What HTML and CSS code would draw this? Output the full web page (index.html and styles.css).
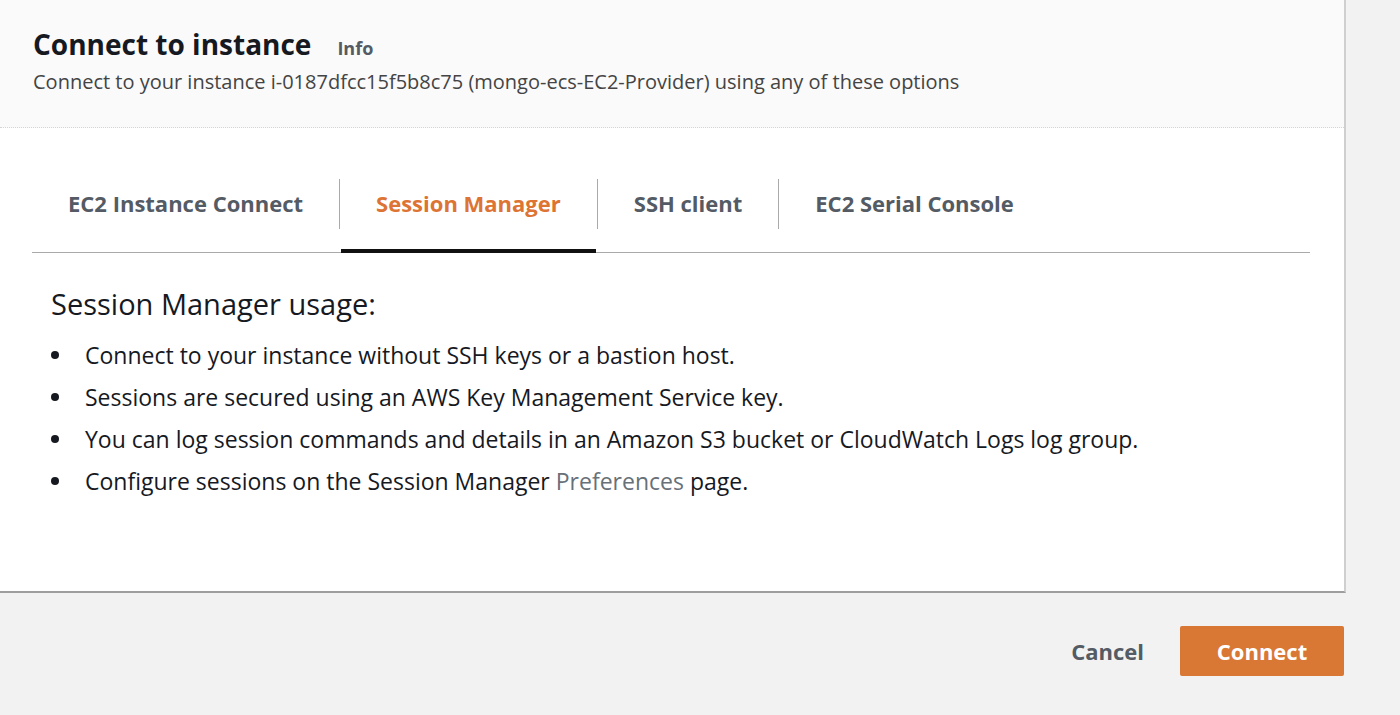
FILE: index.html
```html
<!DOCTYPE html>
<html lang="en">
<head>
<meta charset="utf-8">
<title>Connect to instance</title>
<link rel="stylesheet" href="styles.css">
</head>
<body>
<div class="panel">
  <header class="panel-header">
    <div class="title-row">
      <h1 class="title">Connect to instance</h1>
      <span class="info">Info</span>
    </div>
    <p class="subtitle">Connect to your instance i-0187dfcc15f5b8c75 (mongo-ecs-EC2-Provider) using any of these options</p>
  </header>
  <section class="panel-body">
    <nav class="tabs">
      <div class="tab">EC2 Instance Connect</div>
      <div class="sep"></div>
      <div class="tab active">Session Manager</div>
      <div class="sep"></div>
      <div class="tab">SSH client</div>
      <div class="sep"></div>
      <div class="tab">EC2 Serial Console</div>
    </nav>
    <div class="content">
      <h2 class="usage-title">Session Manager usage:</h2>
      <ul class="usage-list">
        <li>Connect to your instance without SSH keys or a bastion host.</li>
        <li>Sessions are secured using an AWS Key Management Service key.</li>
        <li>You can log session commands and details in an Amazon S3 bucket or CloudWatch Logs log group.</li>
        <li>Configure sessions on the Session Manager <a class="link">Preferences</a> page.</li>
      </ul>
    </div>
  </section>
</div>
<footer class="actions">
  <button class="btn-cancel">Cancel</button>
  <button class="btn-connect">Connect</button>
</footer>
</body>
</html>
```
FILE: styles.css
```css
* { box-sizing: border-box; }
html, body { margin: 0; padding: 0; }
body {
  background: #f2f2f2;
  font-family: "Open Sans", "Liberation Sans", sans-serif;
  color: #16191f;
  width: 1400px;
  height: 715px;
  overflow: hidden;
}
.panel {
  width: 1346px;
  border-right: 2px solid #cfcfcf;
  border-bottom: 2px solid #9e9e9e;
}
.panel-header {
  height: 128px;
  background: #fafafa;
  border-bottom: 1px dotted #d5d5d5;
  padding: 27px 0 0 33px;
}
.title-row {
  display: flex;
  align-items: baseline;
  gap: 26px;
}
.title {
  margin: 0;
  font-size: 28px;
  line-height: 34px;
  font-weight: 700;
  color: #16191f;
}
.info {
  font-size: 18px;
  font-weight: 700;
  color: #545b64;
}
.subtitle {
  margin: 9px 0 0;
  font-size: 20px;
  line-height: 24px;
  color: #444;
}
.panel-body {
  background: #fff;
  height: 463px;
  padding-top: 50px;
}
.tabs {
  display: flex;
  align-items: flex-start;
  margin-left: 32px;
  width: 1278px;
  border-bottom: 1px solid #aaaaaa;
}
.tab {
  padding: 0 35px 21px;
  line-height: 50px;
  font-size: 22px;
  font-weight: 700;
  color: #545b64;
  border-bottom: 4px solid transparent;
  margin-bottom: -1px;
}
.tab:first-child {
  padding-left: 36px;
}
.tab.active {
  color: #dd7433;
  border-bottom-color: #111;
}
.sep {
  width: 1px;
  height: 50px;
  margin: 1px 1px 0;
  background: #aaaaaa;
}
.content {
  padding: 33px 0 0 51px;
}
.usage-title {
  margin: 0;
  font-size: 29px;
  line-height: 36px;
  font-weight: 400;
  color: #16191f;
}
.usage-list {
  list-style: none;
  margin: 12px 0 0;
  padding: 0;
}
.usage-list li {
  display: flex;
  align-items: center;
  font-size: 23px;
  line-height: 42px;
  color: #16191f;
}
.usage-list li::before {
  content: "";
  width: 8px;
  height: 8px;
  border-radius: 50%;
  background: #16191f;
  margin: 0 26px 0 0;
  flex: none;
}
.link {
  color: #687078;
  margin: 0 6px;
}
.actions {
  display: flex;
  justify-content: flex-end;
  align-items: center;
  padding: 33px 56px 0 0;
  gap: 36px;
}
.btn-cancel {
  background: none;
  border: none;
  font-family: inherit;
  font-size: 22px;
  font-weight: 700;
  color: #545b64;
  padding: 0;
}
.btn-connect {
  width: 164px;
  height: 50px;
  background: #d97735;
  border: none;
  border-radius: 2px;
  font-family: inherit;
  font-size: 22px;
  font-weight: 700;
  color: #fff;
}
```
